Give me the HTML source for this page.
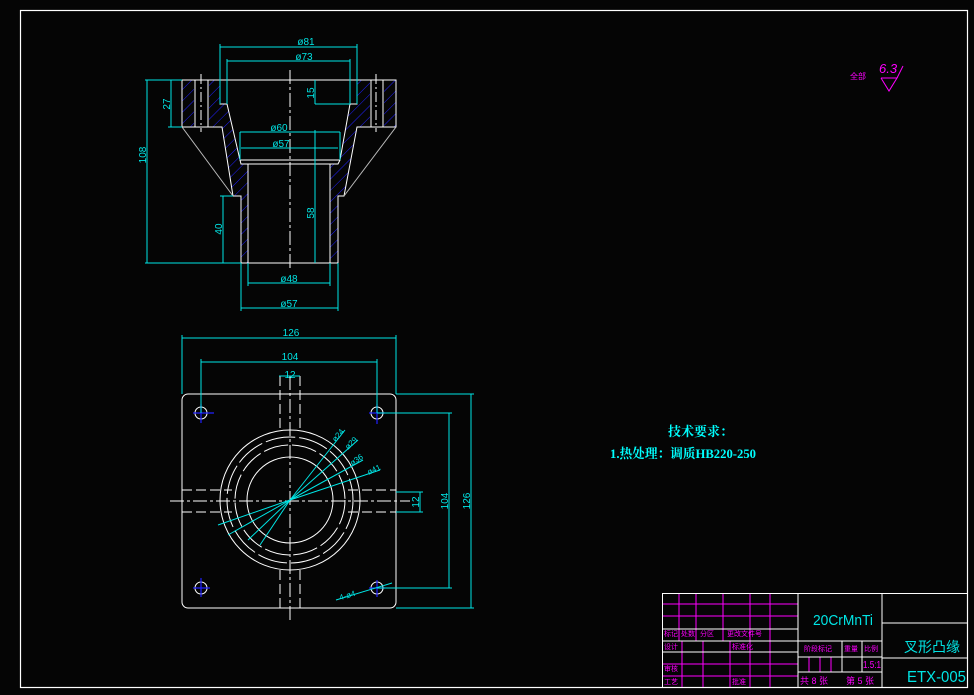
<!DOCTYPE html>
<html><head><meta charset="utf-8"><style>
html,body{margin:0;padding:0;background:#000;}
svg{display:block}
text{font-family:"Liberation Sans","Noto Sans CJK SC",sans-serif;}
</style></head><body>
<svg width="974" height="695" viewBox="0 0 974 695" xmlns="http://www.w3.org/2000/svg">
<defs>
<pattern id="h" patternUnits="userSpaceOnUse" width="8" height="8" patternTransform="rotate(45)">
<line x1="0" y1="0" x2="0" y2="8" stroke="#2020ff" stroke-width="1"/>
</pattern>
</defs>
<rect width="974" height="695" fill="#050505"/>
<rect x="20.5" y="10.5" width="947" height="677" fill="none" stroke="#fff" stroke-width="1.2"/>

<g fill="url(#h)" stroke="none">
<polygon points="182,80 220,80 220,104 227,104 240,160 241,164 248,164 248,263 241,263 241,196 233,196 222,127 182,127"/>
<polygon points="396,80 357,80 357,104 350,104 340,160 338,164 330,164 330,263 338,263 338,196 344,196 357,127 396,127"/>
</g>
<g fill="#000">
<rect x="194" y="80" width="15" height="47"/>
<rect x="370" y="80" width="14" height="47"/>
</g>
<g stroke="#fff" stroke-width="1" fill="none">
<polyline points="182,80 396,80 396,127 357,127 344,196 338,196 338,263 241,263 241,196 233,196 222,127 182,127 182,80"/>
<polyline points="220,80 220,104 227,104 240,160 340,160 350,104 357,104 357,80"/>
<polyline points="240,160 241,164 338,164 340,160"/>
<line x1="248" y1="164" x2="248" y2="263"/>
<line x1="330" y1="164" x2="330" y2="263"/>
<line x1="182" y1="127" x2="233" y2="196" stroke="#bbb"/>
<line x1="396" y1="127" x2="344" y2="196" stroke="#bbb"/>
<line x1="195" y1="80" x2="195" y2="127"/><line x1="208" y1="80" x2="208" y2="127"/>
<line x1="371" y1="80" x2="371" y2="127"/><line x1="383" y1="80" x2="383" y2="127"/>
<line x1="201" y1="74" x2="201" y2="132" stroke-dasharray="10,3,2,3"/>
<line x1="376" y1="74" x2="376" y2="132" stroke-dasharray="10,3,2,3"/>
<line x1="290" y1="70" x2="290" y2="270" stroke-dasharray="14,3,3,3"/>
</g>
<g stroke="#00e5e5" stroke-width="1" fill="none">
<line x1="220" y1="44" x2="220" y2="104"/><line x1="357" y1="44" x2="357" y2="104"/>
<line x1="220" y1="47" x2="357" y2="47"/>
<line x1="227" y1="59" x2="227" y2="104"/><line x1="350" y1="59" x2="350" y2="104"/>
<line x1="227" y1="61" x2="350" y2="61"/>
<line x1="145" y1="80" x2="182" y2="80"/><line x1="145" y1="263" x2="241" y2="263"/>
<line x1="147" y1="80" x2="147" y2="263"/>
<line x1="168" y1="127" x2="182" y2="127"/><line x1="171" y1="80" x2="171" y2="127"/>
<line x1="220" y1="196" x2="233" y2="196"/><line x1="223" y1="196" x2="223" y2="263"/>
<line x1="315" y1="80" x2="315" y2="104"/><line x1="315" y1="104" x2="350" y2="104"/>
<line x1="315" y1="130" x2="315" y2="263"/>
<line x1="240" y1="132" x2="340" y2="132"/><line x1="240" y1="132" x2="240" y2="160"/><line x1="340" y1="132" x2="340" y2="160"/>
<line x1="241" y1="148" x2="338" y2="148"/>
<line x1="248" y1="263" x2="248" y2="286"/><line x1="330" y1="263" x2="330" y2="286"/>
<line x1="248" y1="283" x2="330" y2="283"/>
<line x1="241" y1="263" x2="241" y2="311"/><line x1="338" y1="263" x2="338" y2="311"/>
<line x1="241" y1="308" x2="338" y2="308"/>
</g>
<g fill="#00e5e5" font-size="10" text-anchor="middle">
<text x="306" y="45">ø81</text>
<text x="304" y="60">ø73</text>
<text x="279" y="131">ø60</text>
<text x="281" y="147">ø57</text>
<text x="289" y="282">ø48</text>
<text x="289" y="307">ø57</text>
<text transform="translate(146,155) rotate(-90)">108</text>
<text transform="translate(170,104) rotate(-90)">27</text>
<text transform="translate(222,229) rotate(-90)">40</text>
<text transform="translate(314,93) rotate(-90)">15</text>
<text transform="translate(314,213) rotate(-90)">58</text>
</g>

<g stroke="#fff" stroke-width="1" fill="none">
<rect x="182" y="394" width="214" height="214" rx="6"/>
<circle cx="290" cy="500" r="70"/>
<circle cx="290" cy="500" r="63" stroke-dasharray="30,4"/>
<circle cx="290" cy="500" r="55" stroke-dasharray="25,4"/>
<circle cx="290" cy="500" r="43"/>
<g stroke-dasharray="10,4">
<line x1="280" y1="376" x2="280" y2="430"/><line x1="300" y1="376" x2="300" y2="430"/>
<line x1="280" y1="570" x2="280" y2="612"/><line x1="300" y1="570" x2="300" y2="612"/>
<line x1="182" y1="490" x2="232" y2="490"/><line x1="182" y1="512" x2="232" y2="512"/>
<line x1="348" y1="490" x2="396" y2="490"/><line x1="348" y1="512" x2="396" y2="512"/>
</g>
<line x1="290" y1="376" x2="290" y2="620" stroke-dasharray="14,3,3,3"/>
<line x1="170" y1="501" x2="410" y2="501" stroke-dasharray="14,3,3,3"/>
<circle cx="201" cy="413" r="6"/><circle cx="377" cy="413" r="6"/>
<circle cx="201" cy="588" r="6"/><circle cx="377" cy="588" r="6"/>
</g>
<g stroke="#2020ff" stroke-width="1.2">
<line x1="193" y1="413" x2="214" y2="413"/><line x1="201" y1="404" x2="201" y2="423"/>
<line x1="369" y1="413" x2="385" y2="413"/><line x1="377" y1="404" x2="377" y2="424"/>
<line x1="193" y1="588" x2="210" y2="588"/><line x1="201" y1="578" x2="201" y2="597"/>
<line x1="369" y1="588" x2="385" y2="588"/><line x1="377" y1="580" x2="377" y2="597"/>
</g>
<g stroke="#00e5e5" stroke-width="1" fill="none">
<line x1="182" y1="335" x2="182" y2="394"/><line x1="396" y1="335" x2="396" y2="394"/>
<line x1="182" y1="338" x2="396" y2="338"/>
<line x1="201" y1="359" x2="201" y2="413"/><line x1="377" y1="359" x2="377" y2="413"/>
<line x1="201" y1="362" x2="377" y2="362"/>
<line x1="279" y1="376" x2="300" y2="376"/>
<line x1="396" y1="394" x2="474" y2="394"/><line x1="396" y1="608" x2="474" y2="608"/>
<line x1="471" y1="394" x2="471" y2="608"/>
<line x1="377" y1="413" x2="452" y2="413"/><line x1="377" y1="588" x2="452" y2="588"/>
<line x1="449" y1="413" x2="449" y2="588"/>
<line x1="396" y1="492" x2="423" y2="492"/><line x1="396" y1="512" x2="423" y2="512"/>
<line x1="420" y1="492" x2="420" y2="512"/>
<line x1="290" y1="500" x2="345" y2="430"/>
<line x1="290" y1="500" x2="358" y2="440"/>
<line x1="290" y1="500" x2="363" y2="460"/>
<line x1="290" y1="500" x2="380" y2="470"/>
<line x1="290" y1="500" x2="218" y2="525"/>
<line x1="290" y1="500" x2="228" y2="535"/>
<line x1="290" y1="500" x2="248" y2="540"/>
<line x1="290" y1="500" x2="260" y2="545"/>
<line x1="336" y1="600" x2="392" y2="583"/>
</g>
<g fill="#00e5e5" font-size="10" text-anchor="middle">
<text x="291" y="336">126</text>
<text x="290" y="360">104</text>
<text x="290" y="378">12</text>
<text transform="translate(470,501) rotate(-90)">126</text>
<text transform="translate(448,501) rotate(-90)">104</text>
<text transform="translate(419,502) rotate(-90)">12</text>
<text font-size="8" transform="translate(340,437) rotate(-50)">ø24</text>
<text font-size="8" transform="translate(353,445) rotate(-45)">ø29</text>
<text font-size="8" transform="translate(358,462) rotate(-35)">ø36</text>
<text font-size="8" transform="translate(375,472) rotate(-25)">ø41</text>
<text font-size="8" transform="translate(348,598) rotate(-17)">4-ø4</text>
</g>

<g fill="#ff00ff" stroke="#ff00ff">
<text x="850" y="79" font-size="8" stroke="none">全部</text>
<text x="879" y="73" font-size="13" stroke="none" font-style="italic">6.3</text>
<polyline points="881,78 897,78 889,91 881,78" fill="none"/>
<line x1="897" y1="78" x2="903" y2="66"/>
</g>

<g fill="#00ffff" font-size="13" font-weight="bold">
<text x="668" y="436" style="font-family:'Liberation Serif','Noto Serif CJK SC',serif">技术要求：</text>
<text x="610" y="458" textLength="146" lengthAdjust="spacingAndGlyphs" style="font-family:'Liberation Serif','Noto Serif CJK SC',serif">1.热处理：调质HB220-250</text>
</g>

<g stroke="#ff00ff" stroke-width="1">
<line x1="662" y1="604" x2="798" y2="604"/><line x1="662" y1="616" x2="798" y2="616"/>
<line x1="662" y1="664" x2="798" y2="664"/><line x1="662" y1="676" x2="798" y2="676"/>
<line x1="679" y1="593" x2="679" y2="641"/><line x1="696" y1="593" x2="696" y2="641"/>
<line x1="723" y1="593" x2="723" y2="641"/><line x1="750" y1="593" x2="750" y2="641"/>
<line x1="770" y1="593" x2="770" y2="641"/>
<line x1="682" y1="641" x2="682" y2="687"/><line x1="703" y1="641" x2="703" y2="687"/>
<line x1="730" y1="641" x2="730" y2="687"/><line x1="750" y1="641" x2="750" y2="687"/>
<line x1="770" y1="641" x2="770" y2="687"/>
<line x1="809" y1="657" x2="809" y2="672"/><line x1="820" y1="657" x2="820" y2="672"/><line x1="831" y1="657" x2="831" y2="672"/>
</g>
<g stroke="#fff" stroke-width="1" fill="none">
<rect x="662.5" y="593.5" width="305" height="94"/>
<line x1="798" y1="593" x2="798" y2="688"/>
<line x1="882" y1="593" x2="882" y2="688"/>
<line x1="662" y1="629" x2="798" y2="629"/>
<line x1="662" y1="641" x2="882" y2="641"/>
<line x1="662" y1="652" x2="798" y2="652"/>
<line x1="798" y1="657" x2="882" y2="657"/>
<line x1="798" y1="672" x2="882" y2="672"/>
<line x1="842" y1="641" x2="842" y2="672"/>
<line x1="862" y1="641" x2="862" y2="672"/>
<line x1="882" y1="623" x2="968" y2="623"/>
<line x1="882" y1="658" x2="968" y2="658"/>
</g>
<g fill="#ff00ff" font-size="7">
<text x="664" y="636">标记</text><text x="681" y="636">处数</text><text x="700" y="636">分区</text><text x="727" y="636">更改文件号</text>
<text x="664" y="649">设计</text><text x="732" y="649">标准化</text>
<text x="664" y="671">审核</text>
<text x="664" y="684">工艺</text><text x="732" y="684">批准</text>
<text x="804" y="651">阶段标记</text><text x="844" y="651">重量</text><text x="864" y="651">比例</text>
<text x="863" y="668" font-size="10" textLength="18" lengthAdjust="spacingAndGlyphs">1.5:1</text>
<text x="800" y="684" font-size="9">共 8 张</text><text x="846" y="684" font-size="9">第 5 张</text>
</g>
<g fill="#00e5e5">
<text x="813" y="625" font-size="15" textLength="60" lengthAdjust="spacingAndGlyphs">20CrMnTi</text>
<text x="904" y="652" font-size="14">叉形凸缘</text>
<text x="907" y="682" font-size="16" textLength="59" lengthAdjust="spacingAndGlyphs">ETX-005</text>
</g>
</svg>
</body></html>
